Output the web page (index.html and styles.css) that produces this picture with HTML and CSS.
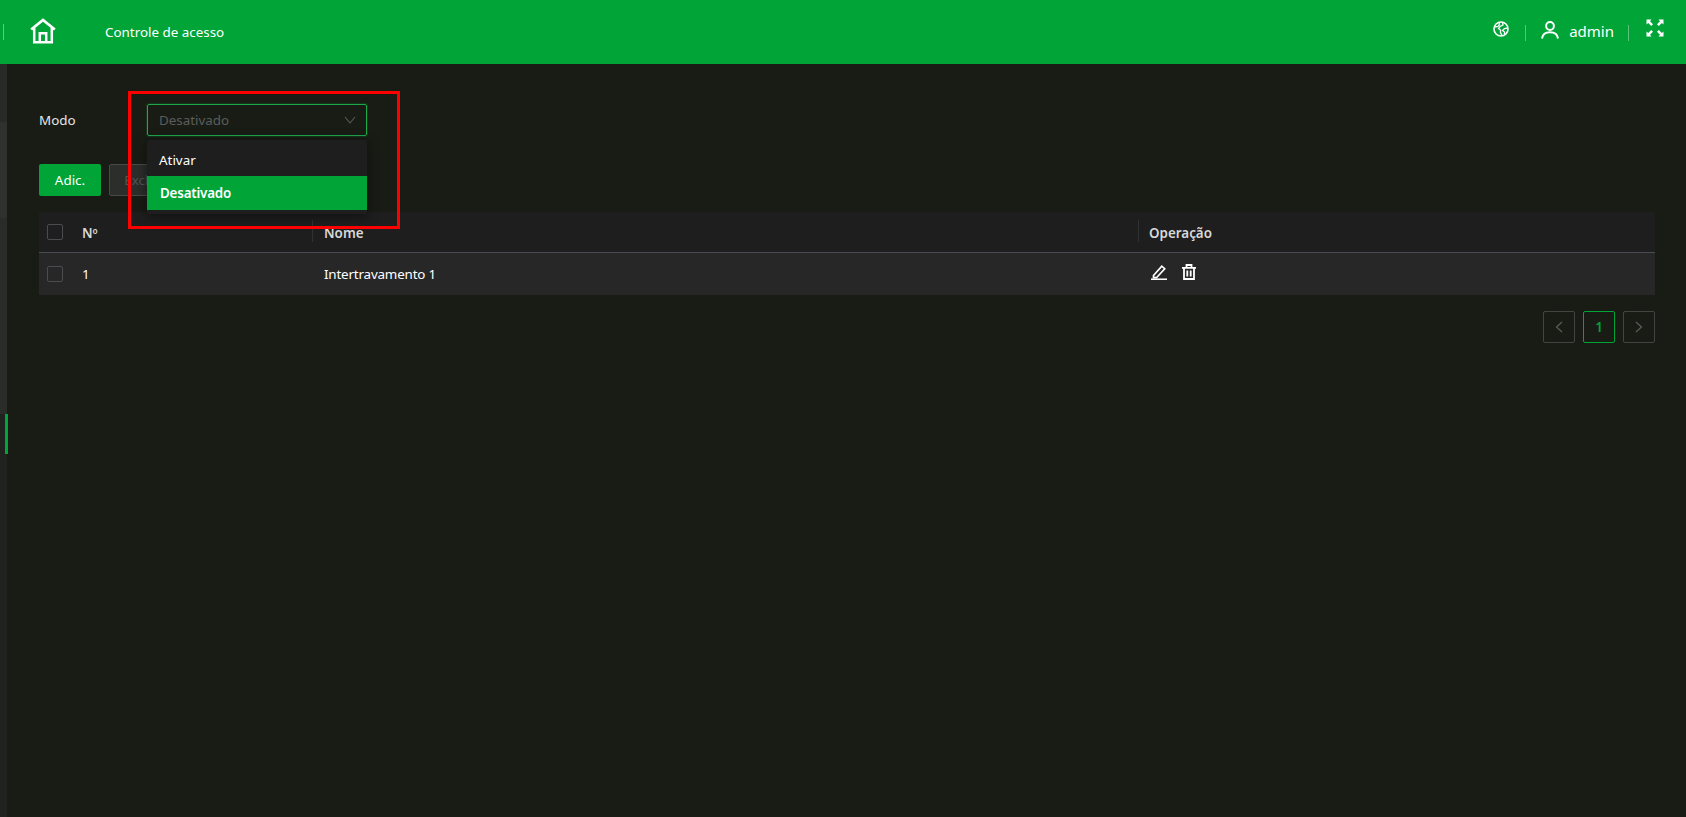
FILE: index.html
```html
<!DOCTYPE html>
<html lang="pt">
<head>
<meta charset="utf-8">
<title>Controle de acesso</title>
<link rel="stylesheet" href="styles.css">
</head>
<body>
<header class="topbar">
  <div class="top-left">
    <span class="tick"></span>
    <svg class="home" viewBox="0 0 26 26" width="26" height="26"><path d="M1.200 11.500 13 2l11.800 9.500" fill="none" stroke="#fff" stroke-width="2.800"/><path d="M4.200 10v14.200h17.600V10M9.800 24V15.200h6.400V24" fill="none" stroke="#fff" stroke-width="2.500"/></svg>
    <span class="title">Controle de acesso</span>
  </div>
  <div class="top-right">
    <svg class="ico globe" viewBox="0 0 16 16" width="16" height="16"><circle cx="8" cy="8" r="7" fill="none" stroke="#fff" stroke-width="1.600"/><path d="M1.500 6 5 5.500 6.500 3.500 6 1.500M9.500 1.500 10 4 7 5.500 5.500 7.500 7.500 9 7.500 11.500 9 14.500M14.500 7 11.500 7.500 9.500 9.500 11.500 11 11.500 13.500" fill="none" stroke="#fff" stroke-width="1.300"/></svg>
    <span class="vline"></span>
    <svg class="ico user" viewBox="0 0 18 18" width="18" height="18"><circle cx="9" cy="5" r="3.900" fill="none" stroke="#fff" stroke-width="2"/><path d="M1 17.500c.6-4.500 3.700-6.300 8-6.300s7.400 1.800 8 6.300" fill="none" stroke="#fff" stroke-width="2"/></svg>
    <span class="admin">admin</span>
    <span class="vline"></span>
    <svg class="ico full" viewBox="0 0 18 18" width="18" height="18"><path d="M.5.500h5L4 2.200 7 5.200 5.200 7 2.200 4 .5 5.500zM17.500.500v5L15.800 4 12.800 7 11 5.200 14 2.200 12.500.500zM.5 17.500v-5L2.200 14l3-3L7 12.800l-3 3L5.500 17.500zM17.500 17.500h-5l1.500-1.700-3-3L12.800 11l3 3 1.700-1.500z" fill="#fff"/></svg>
  </div>
</header>
<div class="layout">
  <aside class="rail">
    <span class="rail-a"></span>
    <span class="rail-b"></span>
    <span class="rail-c"></span>
    <span class="rail-mark"></span>
  </aside>
  <main class="content">
    <div class="mode-row">
      <label class="mode-label">Modo</label>
      <div class="select-wrap">
        <div class="select">
          <span>Desativado</span>
          <svg viewBox="0 0 12 8" width="12" height="8"><path d="M1 1l5 6 5-6" fill="none" stroke="#5b5d5b" stroke-width="1.100"/></svg>
        </div>
        <div class="dropdown">
          <div class="opt">Ativar</div>
          <div class="opt opt-on">Desativado</div>
        </div>
      </div>
    </div>
    <div class="actions">
      <button class="btn btn-green">Adic.</button>
      <button class="btn btn-off">Excluir</button>
    </div>
    <div class="table">
      <div class="tr th">
        <div class="c-check"><span class="check"></span></div>
        <div class="c-no">Nº</div>
        <div class="c-name">Nome</div>
        <div class="c-op">Operação</div>
      </div>
      <div class="tr td">
        <div class="c-check"><span class="check"></span></div>
        <div class="c-no">1</div>
        <div class="c-name">Intertravamento 1</div>
        <div class="c-op icons">
          <svg viewBox="0 0 16 16" width="16" height="16"><path d="M2.500 11.500 10.800 2.200l2.900 2.500-8.200 9H2.500z" fill="none" stroke="#fff" stroke-width="1.700"/><path d="M0 15.300h16" stroke="#fff" stroke-width="1.700"/></svg>
          <svg viewBox="0 0 14 16" width="14" height="16"><path d="M0 3.800h14M4.500 3.800V1h5v2.800M2 3.800V15h10V3.800M5.300 6.500v6M8.700 6.500v6" fill="none" stroke="#fff" stroke-width="1.800"/></svg>
        </div>
      </div>
    </div>
    <nav class="pager">
      <span class="pg"><svg viewBox="0 0 8 12" width="8" height="12"><path d="M7 1 1.500 6 7 11" fill="none" stroke="#5b5d5b" stroke-width="1.200"/></svg></span>
      <span class="pg pg-on">1</span>
      <span class="pg"><svg viewBox="0 0 8 12" width="8" height="12"><path d="M1 1l5.500 5L1 11" fill="none" stroke="#5b5d5b" stroke-width="1.200"/></svg></span>
    </nav>
  </main>
</div>
<div class="annot"></div>
</body>
</html>
```
FILE: styles.css
```css
* { box-sizing: border-box; }
html, body { height: 100%; }
body {
  margin: 0;
  background: #191c15;
  color: #fff;
  font-family: "Noto Sans", "Open Sans", sans-serif;
  font-size: 13.4px;
  display: flex;
  flex-direction: column;
  overflow: hidden;
}
.topbar {
  height: 64px;
  flex: none;
  background: #00a437;
  display: flex;
  justify-content: space-between;
  align-items: center;
}
.top-left { display: flex; align-items: center; }
.tick { width: 1px; height: 16px; margin-left: 3px; background: rgba(255,255,255,.4); }
.home { margin-left: 26px; margin-top: -3px; }
.title { margin-left: 49px; font-size: 13.4px; }
.top-right { display: flex; align-items: center; padding-right: 22px; }
.ico { display: block; }
.vline { width: 1px; height: 16px; background: rgba(255,255,255,.35); margin-top: 2px; }
.globe { margin-right: 16px; margin-top: -6px; }
.user { margin-left: 15px; margin-top: -4px; }
.admin { margin-left: 10px; margin-right: 14px; font-size: 15px; padding-bottom: 2px; }
.full { margin-left: 17px; margin-top: -9px; }
.layout { flex: 1; display: flex; min-height: 0; }
.rail {
  width: 7px;
  flex: none;
  background: #20221f;
  display: flex;
  flex-direction: column;
  position: relative;
}
.rail-a { height: 58px; background: #272a27; }
.rail-b { height: 96px; background: #2f312e; }
.rail-c { height: 196px; background: #2a2c29; }
.rail-mark { position: absolute; left: 5px; top: 350px; width: 3px; height: 40px; background: #00a437; }
.content { flex: 1; padding: 40px 31px 0 32px; min-width: 0; }
.mode-row { display: flex; align-items: center; height: 32px; }
.mode-label { width: 108px; color: #e6e6e6; padding-bottom: 1px; }
.select-wrap { position: relative; width: 220px; }
.select {
  height: 32px;
  border: 1px solid #1fa84a;
  border-radius: 2px;
  box-shadow: 0 0 0 1px rgba(0,165,56,.18);
  padding: 1px 11px 2px;
  color: #5b5d5b;
  display: flex;
  align-items: center;
  justify-content: space-between;
}
.select svg { margin: 0 -1px 0 0; }
.dropdown {
  position: absolute;
  z-index: 2;
  left: 0;
  right: 0;
  top: 36px;
  height: 74px;
  padding: 4px 0;
  background: #1e1e1f;
  border-radius: 2px;
  box-shadow: 0 2px 12px rgba(0,0,0,.5);
}
.opt { height: 32px; padding: 0 12px; display: flex; align-items: center; }
.opt-on { height: 34px; padding-left: 13px; background: #00a437; font-weight: 600; letter-spacing: -.2px; }
.actions { display: flex; gap: 8px; margin-top: 28px; }
.btn {
  height: 32px;
  width: 62px;
  border-radius: 2px;
  border: 1px solid transparent;
  font: inherit;
  color: #fff;
  padding: 0;
}
.btn-green { background: #00a437; }
.btn-off { width: 72px; background: #2c2e2b; border-color: #484a48; color: #4c5756; }
.table { margin-top: 16px; }
.tr { display: flex; align-items: center; }
.th { height: 41px; background: #1e1e1f; border-bottom: 1px solid #4a4c55; font-weight: 600; color: #d8d8d8; }
.td { height: 42px; background: #272728; }
.th .c-no, .th .c-name, .th .c-op { padding-top: 1px; }
.td .c-no, .td .c-name { padding-bottom: 1px; }
.td .c-name { letter-spacing: -.18px; }
.c-check { width: 43px; padding-left: 8px; display: flex; }
.check { width: 16px; height: 16px; border: 1px solid #4a4c50; border-radius: 2px; display: block; }
.c-no { width: 230px; }
.c-name { width: 826px; padding-left: 12px; position: relative; }
.c-op { padding-left: 11px; position: relative; }
.th .c-name::before, .th .c-op::before {
  content: "";
  position: absolute;
  left: 0;
  top: -3px;
  height: 22px;
  width: 1px;
  background: #303132;
}
.icons { display: flex; gap: 15px; padding-left: 13px; margin-top: -4px; }
.pager { display: flex; justify-content: flex-end; gap: 8px; margin-top: 16px; }
.pg {
  width: 32px;
  height: 32px;
  border: 1px solid #434543;
  border-radius: 2px;
  display: flex;
  align-items: center;
  justify-content: center;
}
.pg-on { border-color: #00a437; color: #00a437; font-weight: 600; }
.annot {
  position: absolute;
  z-index: 5;
  left: 128px;
  top: 91px;
  width: 272px;
  height: 138px;
  border: 3px solid #ff0000;
  pointer-events: none;
}
```
